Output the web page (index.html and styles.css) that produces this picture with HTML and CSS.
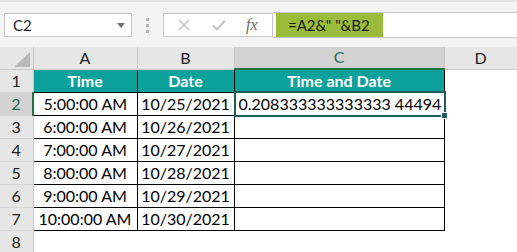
FILE: index.html
```html
<!DOCTYPE html>
<html lang="en">
  <head>
    <meta charset="UTF-8" />
    <meta name="viewport" content="width=device-width, initial-scale=1.0" />
    <title>Time and Date</title>
    <link rel="stylesheet" href="styles.css">
  </head>
  <body>
    <div class="topbar">
      <div class="namebox">
        <span>C2</span>
        <svg class="caret" width="8" height="5" viewBox="0 0 8 5"><polygon points="0,0 8,0 4,5" fill="#6f6f6f" /></svg>
      </div>
      <div class="dots"><i></i><i></i><i></i></div>
      <div class="fx-icons">
        <svg width="12" height="12" viewBox="0 0 12 12"><path d="M1 1 L11 11 M11 1 L1 11" stroke="#c4c4c4" stroke-width="1.6" fill="none" /></svg>
        <svg width="14" height="12" viewBox="0 0 14 12"><path d="M1 6.5 L5 10.5 L13 1.5" stroke="#c4c4c4" stroke-width="2" fill="none" /></svg>
        <span class="fx">fx</span>
      </div>
      <div class="input">
        <span class="formula">=A2&amp;" "&amp;B2</span>
      </div>
    </div>

    <table class="sheet">
      <colgroup>
        <col class="c-row" />
        <col class="c-a" />
        <col class="c-b" />
        <col class="c-c" />
        <col class="c-d" />
      </colgroup>
      <thead>
        <tr>
          <th class="corner">
            <svg width="16" height="15" viewBox="0 0 16 15"><polygon points="16,0 16,15 0,15" fill="#b9b9b9" /></svg>
          </th>
          <th>A</th>
          <th>B</th>
          <th class="active">C</th>
          <th>D</th>
        </tr>
      </thead>
      <tbody>
        <tr>
          <th class="num">1</th>
          <td class="head">Time</td>
          <td class="head">Date</td>
          <td class="head">Time and Date</td>
          <td class="blank"></td>
        </tr>
        <tr>
          <th class="num active-row">2</th>
          <td class="val">5:00:00 AM</td>
          <td class="val">10/25/2021</td>
          <td class="val left selected">0.208333333333333 44494<div class="sel"></div></td>
          <td class="blank"></td>
        </tr>
        <tr>
          <th class="num">3</th>
          <td class="val">6:00:00 AM</td>
          <td class="val">10/26/2021</td>
          <td class="val"></td>
          <td class="blank"></td>
        </tr>
        <tr>
          <th class="num">4</th>
          <td class="val">7:00:00 AM</td>
          <td class="val">10/27/2021</td>
          <td class="val"></td>
          <td class="blank"></td>
        </tr>
        <tr>
          <th class="num">5</th>
          <td class="val">8:00:00 AM</td>
          <td class="val">10/28/2021</td>
          <td class="val"></td>
          <td class="blank"></td>
        </tr>
        <tr>
          <th class="num">6</th>
          <td class="val">9:00:00 AM</td>
          <td class="val">10/29/2021</td>
          <td class="val"></td>
          <td class="blank"></td>
        </tr>
        <tr>
          <th class="num">7</th>
          <td class="val">10:00:00 AM</td>
          <td class="val">10/30/2021</td>
          <td class="val"></td>
          <td class="blank"></td>
        </tr>
        <tr>
          <th class="num">8</th>
          <td class="blank"></td>
          <td class="blank"></td>
          <td class="blank"></td>
          <td class="blank"></td>
        </tr>
      </tbody>
    </table>
  </body>
</html>
```

FILE: styles.css
```css
body {
  margin: 0;
  background-color: #fff;
  font-family: Lato, "Open Sans", sans-serif;
  color: #000;
  overflow: hidden;
}

.topbar {
  display: flex;
  align-items: stretch;
  height: 47px;
  box-sizing: border-box;
  padding: 11px 0 10px 4px;
  background-color: #f3f3f3;
  border-top: 2px solid #e4e4e4;
}

.namebox {
  display: flex;
  align-items: center;
  justify-content: space-between;
  width: 128px;
  box-sizing: border-box;
  padding: 0 6px 0 8px;
  background-color: #fff;
  border: 1px solid #c6c6c6;
  font-size: 15px;
  color: #222;
}

.dots {
  display: flex;
  flex-direction: column;
  align-items: center;
  justify-content: center;
  gap: 3px;
  width: 31px;
}

.dots i {
  display: block;
  width: 3px;
  height: 3px;
  background-color: #b4b4b4;
}

.fx-icons {
  display: flex;
  align-items: center;
  width: 110px;
  box-sizing: border-box;
  padding-left: 14px;
  gap: 22px;
  background-color: #fff;
  border: 1px solid #c6c6c6;
}

.fx {
  font-family: "Liberation Serif", serif;
  font-style: italic;
  font-size: 16px;
  color: #6a6a6a;
  margin-left: -2px;
}

.input {
  flex: 1;
  display: flex;
  padding-left: 3px;
  background-color: #fff;
  border-top: 1px solid #c6c6c6;
  border-bottom: 1px solid #c6c6c6;
  margin-top: -1px;
  margin-bottom: -1px;
}

.formula {
  display: flex;
  align-items: center;
  width: 107px;
  box-sizing: border-box;
  padding-left: 12px;
  background-color: #9bbb3a;
  font-size: 15px;
  color: #1c1c1c;
}

.sheet {
  width: 517px;
  table-layout: fixed;
  border-collapse: collapse;
}

.c-row { width: 33px; }
.c-a { width: 104px; }
.c-b { width: 97px; }
.c-c { width: 210px; }
.c-d { width: 73px; }

.sheet th,
.sheet td {
  padding: 0 0 2px;
  height: 20px;
  line-height: 18px;
  font-size: 16px;
  font-weight: normal;
  white-space: nowrap;
  overflow: visible;
  vertical-align: bottom;
}

thead th {
  background-color: #e6e6e6;
  border-right: 1px solid #c8c8c8;
  border-bottom: 1px solid #c8c8c8;
  color: #222;
}

.sheet thead th {
  height: 19px;
}

.sheet thead th.corner {
  text-align: right;
  padding: 0 3px 2px 0;
  line-height: 0;
}

thead th.active {
  background-color: #d2d2d2;
  color: #1e6b56;
  border-bottom: 2px solid #217346;
}

th.num {
  background-color: #e6e6e6;
  border-right: 1px solid #c8c8c8;
  border-bottom: 1px solid #d4d4d4;
  color: #222;
}

th.active-row {
  background-color: #d2d2d2;
  color: #1e6b56;
  border-right: 2px solid #217346;
}

td.head {
  background-color: #0ca19b;
  color: #fff;
  font-weight: bold;
  text-align: center;
  border: 1px solid #000;
}

td.val {
  border: 1px solid #000;
  text-align: center;
}

.sheet td.left {
  text-align: left;
  padding-left: 4px;
}

td.blank {
  border: none;
}

td.selected {
  position: relative;
}

.sel {
  position: absolute;
  top: -2px;
  left: -1px;
  right: -2px;
  bottom: -2px;
  border: 2px solid #1d5c58;
}

.sel::after {
  content: "";
  position: absolute;
  right: -4px;
  bottom: -4px;
  width: 5px;
  height: 5px;
  background-color: #1d5c58;
  border: 1px solid #fff;
}
```
